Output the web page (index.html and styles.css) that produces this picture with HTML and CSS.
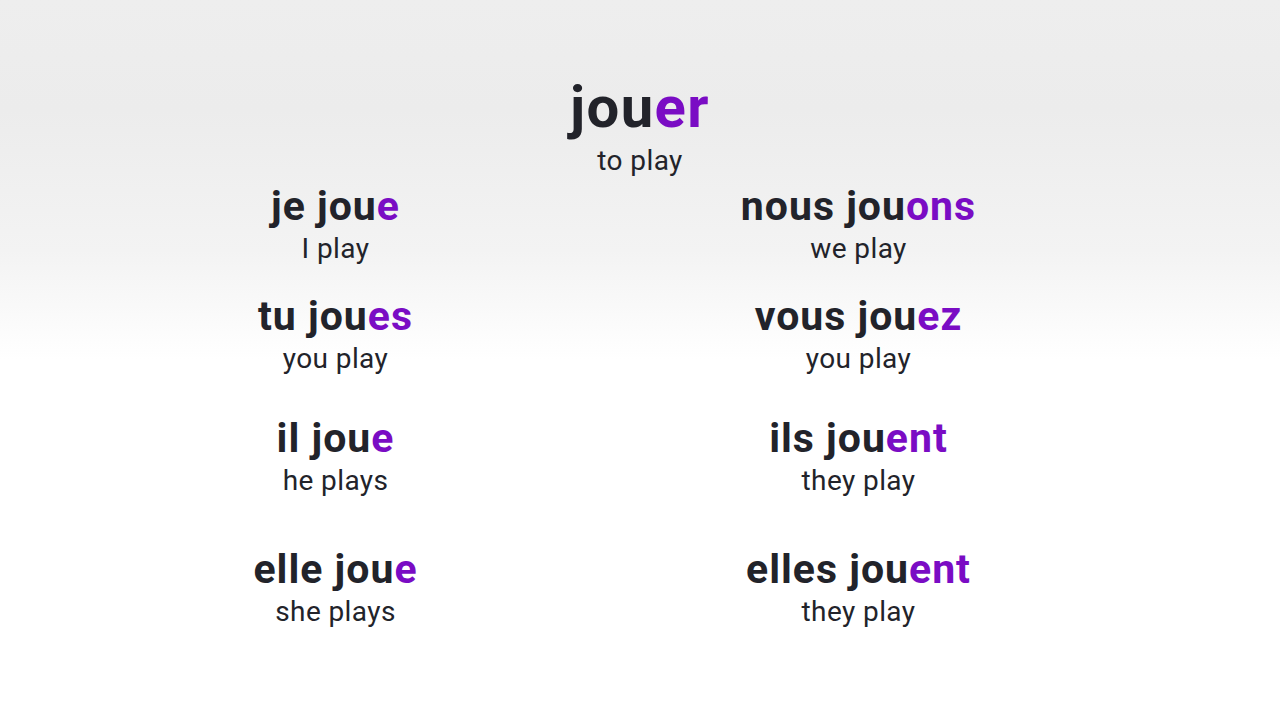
FILE: index.html
```html
<!DOCTYPE html>
<html lang="fr">
<head>
    <meta charset="UTF-8">
    <meta name="viewport" content="width=device-width, initial-scale=1.0">
    <title>jouer - to play</title>
    <link rel="stylesheet" href="styles.css">
</head>
<body>
    <div class="slide">
        <header class="verb">
            <h1>jou<span class="ending">er</span></h1>
            <p>to play</p>
        </header>

        <div class="forms">
            <div class="form">
                <div class="term">je jou<span class="ending">e</span></div>
                <div class="meaning">I play</div>
            </div>
            <div class="form">
                <div class="term">nous jou<span class="ending">ons</span></div>
                <div class="meaning">we play</div>
            </div>

            <div class="form">
                <div class="term">tu jou<span class="ending">es</span></div>
                <div class="meaning">you play</div>
            </div>
            <div class="form">
                <div class="term">vous jou<span class="ending">ez</span></div>
                <div class="meaning">you play</div>
            </div>

            <div class="form">
                <div class="term">il jou<span class="ending">e</span></div>
                <div class="meaning">he plays</div>
            </div>
            <div class="form">
                <div class="term">ils jou<span class="ending">ent</span></div>
                <div class="meaning">they play</div>
            </div>

            <div class="form">
                <div class="term">elle jou<span class="ending">e</span></div>
                <div class="meaning">she plays</div>
            </div>
            <div class="form">
                <div class="term">elles jou<span class="ending">ent</span></div>
                <div class="meaning">they play</div>
            </div>
        </div>
    </div>
</body>
</html>
```

FILE: styles.css
```css
body {
    margin: 0;
    padding: 0;
    font-family: Roboto, "Noto Sans", Arial, sans-serif;
    color: #22232a;
    background: linear-gradient(180deg, #eeeeee 0, #ececec 110px, #f3f3f3 250px, #ffffff 360px) no-repeat;
    background-color: #fff;
    min-height: 720px;
}

.slide {
    padding-top: 72px;
}

.verb {
    text-align: center;
}

.verb h1 {
    margin: 0;
    font-size: 58px;
    font-weight: 700;
    line-height: 70px;
    letter-spacing: 1.4px;
}

.verb p {
    margin: 2px 0 0;
    font-size: 28px;
    line-height: 34px;
    letter-spacing: 0.4px;
}

.ending {
    color: #7a0cc4;
}

.forms {
    display: grid;
    grid-template-columns: 1fr 1fr;
    grid-template-rows: 110px 122px 131px auto;
    width: 1046px;
    margin: 6px 0 0 74px;
}

.form {
    text-align: center;
}

.term {
    font-size: 41px;
    font-weight: 700;
    line-height: 44px;
    letter-spacing: 1px;
}

.meaning {
    margin-top: 2px;
    font-size: 28px;
    line-height: 38px;
    letter-spacing: 0.4px;
}
```
